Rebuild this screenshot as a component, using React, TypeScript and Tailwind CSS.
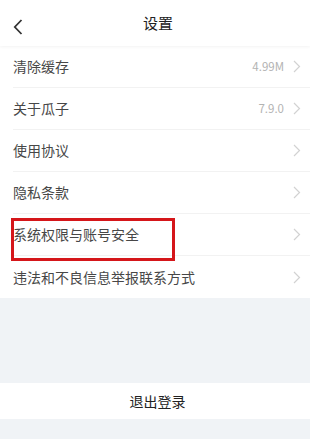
import React from "react";

const rows: { label: string; value?: string }[] = [
  { label: "清除缓存", value: "4.99M" },
  { label: "关于瓜子", value: "7.9.0" },
  { label: "使用协议" },
  { label: "隐私条款" },
  { label: "系统权限与账号安全" },
  { label: "违法和不良信息举报联系方式" },
];

function Chevron() {
  return (
    <svg width="8" height="13" viewBox="0 0 8 13" fill="none" className="shrink-0">
      <path d="M1 1l5.5 5.5L1 12" stroke="#d2d2d2" strokeWidth="1.2" />
    </svg>
  );
}

export default function App() {
  return (
    <div
      className="flex h-[439px] w-[310px] flex-col bg-[#f0f3f6]"
      style={{ fontFamily: '"Noto Sans CJK SC", "Noto Sans", sans-serif' }}
    >
      <header className="relative z-10 flex h-[46px] shrink-0 items-center bg-white shadow-[0_1px_3px_rgba(0,0,0,0.05)]">
        <svg
          width="10"
          height="16"
          viewBox="0 0 10 16"
          fill="none"
          className="absolute left-[13px] top-[19px]"
        >
          <path d="M8.5 1L1.8 8l6.7 7" stroke="#333" strokeWidth="1.8" />
        </svg>
        <h1 className="flex-1 pl-[6px] text-center text-[15px] text-[#222]">设置</h1>
      </header>

      <div className="relative bg-white">
        {rows.map((row, i) => (
          <div key={row.label} className="pl-[13px]">
            <div
              className={`flex h-[42px] items-center pr-[9px] ${
                i < rows.length - 1 ? "border-b border-[#f2f2f2]" : ""
              }`}
            >
              <span className="flex-1 text-[14px] text-[#474747]">{row.label}</span>
              {row.value ? (
                <span className="mr-[9px] text-[11.5px] text-[#b3b3b3]">{row.value}</span>
              ) : null}
              <Chevron />
            </div>
          </div>
        ))}
        <div className="pointer-events-none absolute left-[11px] top-[172px] h-[43px] w-[164px] border-[3px] border-[#d5161a]" />
      </div>

      <div className="h-[85px] shrink-0" />

      <button
        type="button"
        className="flex h-[36px] shrink-0 items-center justify-center bg-white pl-[5px] text-[14px] text-[#222]"
      >
        退出登录
      </button>
    </div>
  );
}
